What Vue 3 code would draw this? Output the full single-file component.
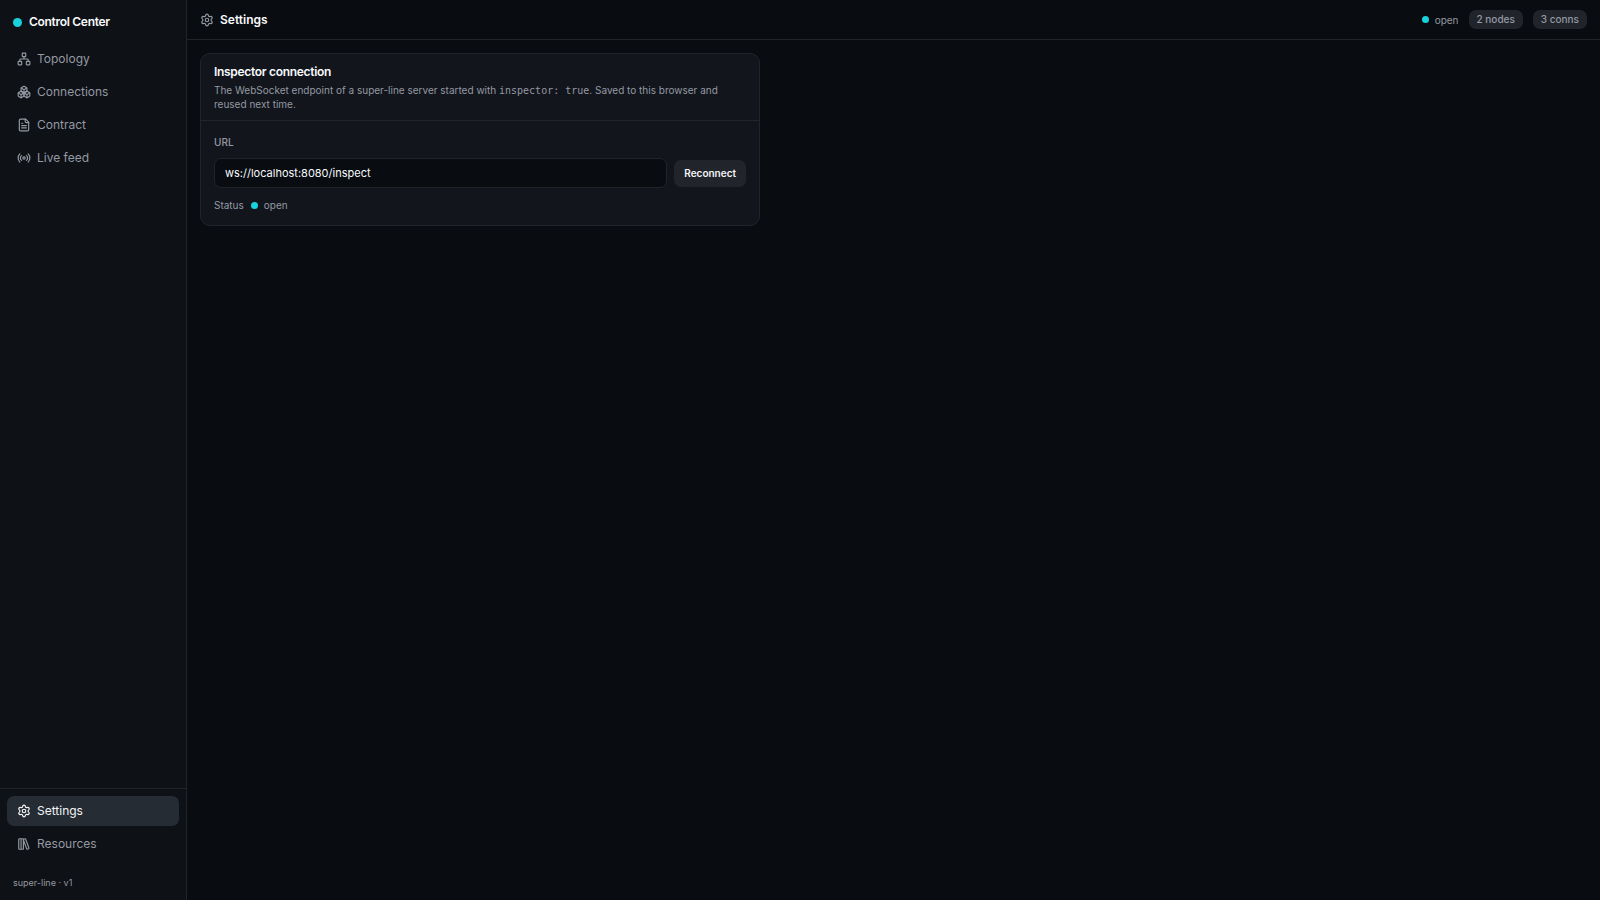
<template>
  <div class="app">
    <aside class="sidebar">
      <div class="brand">
        <span class="dot"></span>
        <span>Control Center</span>
      </div>
      <nav class="nav">
        <a v-for="item in mainNav" :key="item.label" class="nav-item" :href="item.href">
          <svg class="icon" viewBox="0 0 24 24" aria-hidden="true">
            <path v-for="d in icons[item.icon]" :key="d" :d="d" />
          </svg>
          <span>{{ item.label }}</span>
        </a>
      </nav>
      <div class="sidebar-bottom">
        <nav class="nav">
          <a
            v-for="item in footerNav"
            :key="item.label"
            class="nav-item"
            :class="{ active: item.active }"
            :href="item.href"
          >
            <svg class="icon" viewBox="0 0 24 24" aria-hidden="true">
              <path v-for="d in icons[item.icon]" :key="d" :d="d" />
            </svg>
            <span>{{ item.label }}</span>
          </a>
        </nav>
        <p class="version">super-line · v1</p>
      </div>
    </aside>

    <div class="content">
      <header class="topbar">
        <svg class="icon" viewBox="0 0 24 24" aria-hidden="true">
          <path v-for="d in icons.settings" :key="d" :d="d" />
        </svg>
        <h1>Settings</h1>
        <div class="stats">
          <span class="status"><span class="dot small"></span>{{ status }}</span>
          <span class="badge">{{ nodes }} nodes</span>
          <span class="badge">{{ conns }} conns</span>
        </div>
      </header>

      <main class="page">
        <section class="card">
          <div class="card-head">
            <h2>Inspector connection</h2>
            <p>
              The WebSocket endpoint of a super-line server started with
              <code>inspector: true</code>. Saved to this browser and reused next time.
            </p>
          </div>
          <form class="card-body" @submit.prevent>
            <label for="url">URL</label>
            <div class="row">
              <input id="url" v-model="url" type="text" spellcheck="false" />
              <button type="submit">Reconnect</button>
            </div>
            <div class="status-line">
              Status
              <span class="status"><span class="dot small"></span>{{ status }}</span>
            </div>
          </form>
        </section>
      </main>
    </div>
  </div>
</template>

<script setup>
import { ref } from "vue";

const url = ref("ws://localhost:8080/inspect");
const status = ref("open");
const nodes = ref(2);
const conns = ref(3);

const mainNav = [
  { label: "Topology", icon: "topology", href: "#topology" },
  { label: "Connections", icon: "connections", href: "#connections" },
  { label: "Contract", icon: "contract", href: "#contract" },
  { label: "Live feed", icon: "live", href: "#live" },
];

const footerNav = [
  { label: "Settings", icon: "settings", href: "#settings", active: true },
  { label: "Resources", icon: "resources", href: "#resources" },
];

const icons = {
  topology: [
    "M10 2h4a1 1 0 0 1 1 1v4a1 1 0 0 1-1 1h-4a1 1 0 0 1-1-1V3a1 1 0 0 1 1-1z",
    "M3 16h4a1 1 0 0 1 1 1v4a1 1 0 0 1-1 1H3a1 1 0 0 1-1-1v-4a1 1 0 0 1 1-1z",
    "M17 16h4a1 1 0 0 1 1 1v4a1 1 0 0 1-1 1h-4a1 1 0 0 1-1-1v-4a1 1 0 0 1 1-1z",
    "M5 16v-3a1 1 0 0 1 1-1h12a1 1 0 0 1 1 1v3M12 12V8",
  ],
  connections: [
    "M2.97 12.92A2 2 0 0 0 2 14.63v3.24a2 2 0 0 0 .97 1.71l3 1.8a2 2 0 0 0 2.06 0L12 19v-5.5l-5-3-4.03 2.42Z",
    "m7 16.5-4.74-2.85M7 16.5l5-3M7 16.5v5.17",
    "M12 13.5V19l3.97 2.38a2 2 0 0 0 2.06 0l3-1.8a2 2 0 0 0 .97-1.71v-3.24a2 2 0 0 0-.97-1.71L17 10.5l-5 3Z",
    "m17 16.5-5-3M17 16.5l4.74-2.85M17 16.5v5.17",
    "M7.97 4.42A2 2 0 0 0 7 6.13v4.37l5 3 5-3V6.13a2 2 0 0 0-.97-1.71l-3-1.8a2 2 0 0 0-2.06 0l-3 1.8Z",
    "M12 8 7.26 5.15M12 8l4.74-2.85M12 13.5V8",
  ],
  contract: [
    "M15 2H6a2 2 0 0 0-2 2v16a2 2 0 0 0 2 2h12a2 2 0 0 0 2-2V7Z",
    "M14 2v4a2 2 0 0 0 2 2h4M10 9H8M16 13H8M16 17H8",
  ],
  live: [
    "M4.9 19.1a10 10 0 0 1 0-14.2M7.8 16.2a6 6 0 0 1 0-8.4M16.2 7.8a6 6 0 0 1 0 8.4M19.1 4.9a10 10 0 0 1 0 14.2",
    "M12 10a2 2 0 1 1 0 4 2 2 0 0 1 0-4z",
  ],
  settings: [
    "M9.67 4.14a2.34 2.34 0 0 1 4.66 0 2.34 2.34 0 0 0 3.32 1.91 2.34 2.34 0 0 1 2.33 4.03 2.34 2.34 0 0 0 0 3.84 2.34 2.34 0 0 1-2.33 4.03 2.34 2.34 0 0 0-3.32 1.91 2.34 2.34 0 0 1-4.66 0 2.34 2.34 0 0 0-3.32-1.91 2.34 2.34 0 0 1-2.33-4.03 2.34 2.34 0 0 0 0-3.84 2.34 2.34 0 0 1 2.33-4.03 2.34 2.34 0 0 0 3.32-1.91z",
    "M12 9a3 3 0 1 1 0 6 3 3 0 0 1 0-6z",
  ],
  resources: [
    "M4 3h6a1 1 0 0 1 1 1v16a1 1 0 0 1-1 1H4a1 1 0 0 1-1-1V4a1 1 0 0 1 1-1zM7 3v18",
    "M20.4 18.9c.2.5-.1 1.1-.6 1.3l-1.9.7c-.5.2-1.1-.1-1.3-.6L11.1 5.1c-.2-.5.1-1.1.6-1.3l1.9-.7c.5-.2 1.1.1 1.3.6Z",
  ],
};
</script>

<style>
body {
  background: #090c10;
}
</style>

<style scoped>
.app {
  display: flex;
  min-height: 100vh;
  background: #090c10;
  color: #f8fafc;
  font-family: Inter, "Liberation Sans", sans-serif;
  font-size: 12px;
  line-height: 16px;
}
h1, h2, p { margin: 0; }
.icon {
  width: 14px;
  height: 14px;
  flex: none;
  fill: none;
  stroke: currentColor;
  stroke-width: 2;
  stroke-linecap: round;
  stroke-linejoin: round;
}
.dot {
  width: 9px;
  height: 9px;
  flex: none;
  border-radius: 50%;
  background: #18d2dc;
}
.dot.small { width: 7px; height: 7px; }

.sidebar {
  width: 186px;
  flex: none;
  display: flex;
  flex-direction: column;
  background: #0e1116;
  border-right: 1px solid #212429;
}
.brand {
  display: flex;
  align-items: center;
  gap: 7px;
  padding: 14px 13px;
  font-weight: 600;
  letter-spacing: -0.025em;
}
.nav {
  display: flex;
  flex-direction: column;
  gap: 3px;
  padding: 0 7px;
}
.nav-item {
  display: flex;
  align-items: center;
  gap: 6px;
  height: 30px;
  padding: 0 10px;
  border-radius: 7px;
  color: #9499a3;
  text-decoration: none;
}
.nav-item.active {
  background: #262c34;
  color: #f3f4f6;
}
.sidebar-bottom {
  margin-top: auto;
  padding-top: 7px;
  border-top: 1px solid #212429;
}
.version {
  padding: 16px 13px 9px;
  color: #9499a3;
  font-size: 9px;
}

.content {
  flex: 1;
  min-width: 0;
}
.topbar {
  display: flex;
  align-items: center;
  gap: 6px;
  height: 39px;
  padding: 0 13px;
  border-bottom: 1px solid #212429;
}
.topbar .icon { color: #9499a3; }
h1 {
  font-size: 12px;
  font-weight: 600;
}
.stats {
  display: flex;
  align-items: center;
  gap: 10px;
  margin-left: auto;
}
.status {
  display: inline-flex;
  align-items: center;
  gap: 6px;
  color: #9499a3;
  font-size: 10px;
}
.badge {
  padding: 1px 8px;
  border-radius: 7px;
  background: #21252b;
  color: #9499a3;
  font-size: 10px;
  font-weight: 500;
  line-height: 17px;
}

.page { padding: 13px; }
.card {
  box-sizing: border-box;
  max-width: 560px;
  border: 1px solid #212429;
  border-radius: 10px;
  background: #12151c;
}
.card-head {
  padding: 9px 13px;
  border-bottom: 1px solid #212429;
}
h2 {
  font-size: 12px;
  font-weight: 600;
  line-height: 17px;
  letter-spacing: -0.025em;
}
.card-head p {
  margin-top: 3px;
  color: #9499a3;
  font-size: 10px;
  line-height: 14px;
}
code {
  font-family: "DejaVu Sans Mono", monospace;
  font-size: 10px;
  line-height: 10px;
}
.card-body {
  display: flex;
  flex-direction: column;
  padding: 13px 13px 12px;
}
label {
  color: #9499a3;
  font-size: 10px;
  font-weight: 500;
}
.row {
  display: flex;
  align-items: center;
  gap: 7px;
  margin-top: 8px;
}
input {
  flex: 1;
  min-width: 0;
  height: 30px;
  box-sizing: border-box;
  padding: 0 10px;
  border: 1px solid #212429;
  border-radius: 7px;
  outline: none;
  background: #090c10;
  color: #f8fafc;
  font: inherit;
  font-size: 11px;
}
button {
  height: 27px;
  padding: 0 10px;
  border: none;
  border-radius: 7px;
  background: #21252b;
  color: #f3f4f6;
  font: inherit;
  font-size: 10px;
  font-weight: 600;
  cursor: pointer;
}
.status-line {
  display: flex;
  align-items: center;
  gap: 7px;
  margin-top: 9px;
  color: #9499a3;
  font-size: 10px;
}
</style>
